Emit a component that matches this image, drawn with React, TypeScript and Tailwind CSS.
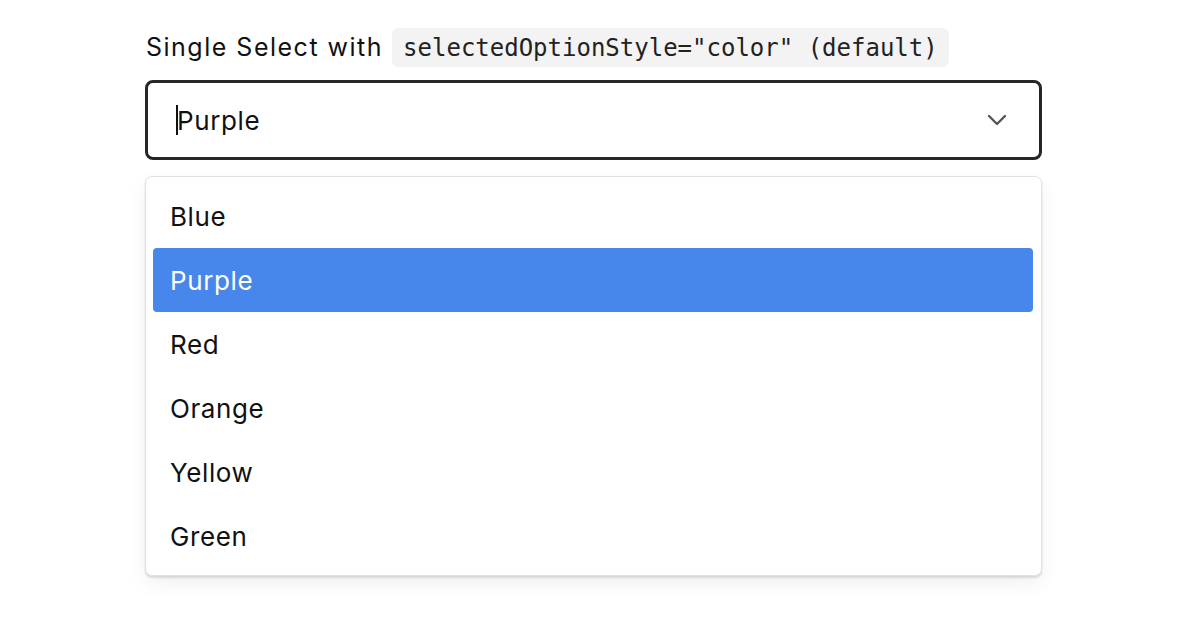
import React from "react";

const options = ["Blue", "Purple", "Red", "Orange", "Yellow", "Green"];

export default function App() {
  return (
    <div className="w-[1188px] h-[620px] bg-white" style={{ fontFamily: "Inter, 'Noto Sans', sans-serif" }}>
      <div className="w-[897px] ml-[145px] pt-[28px]">
        <div className="flex items-center h-[39px]">
          <span className="text-[25px] text-[#111] tracking-[1.5px] pl-[1px]">Single Select with</span>
          <code
            className="ml-[9px] h-[39px] flex items-center px-[11px] rounded-[6px] bg-[#f3f3f3] text-[24px] text-[#222]"
            style={{ fontFamily: "'DejaVu Sans Mono', monospace" }}
          >
            selectedOptionStyle="color" (default)
          </code>
        </div>
        <div className="mt-[13px] h-[80px] border-[3px] border-[#262626] rounded-[8px] flex items-center pl-[28px] pr-[32px]">
          <span className="w-[2px] h-[30px] bg-[#111] -mr-[1px]" />
          <span className="flex-1 text-[26px] tracking-[0.6px] text-[#111]">Purple</span>
          <svg width="20" height="12" viewBox="0 0 20 12" fill="none">
            <path d="M2 2 L10 10 L18 2" stroke="#555" strokeWidth="2.4" strokeLinecap="round" strokeLinejoin="round" />
          </svg>
        </div>
        <div className="mt-[16px] border border-[#e2e2e2] rounded-[7px] p-[7px] pr-[8px] bg-white shadow-[0_2px_2px_rgba(0,0,0,0.12),0_8px_20px_rgba(0,0,0,0.06)]">
          {options.map((o) => (
            <div
              key={o}
              className={
                "h-[64px] flex items-center pl-[17px] rounded-[4px] text-[26px] tracking-[0.6px] " +
                (o === "Purple" ? "bg-[#4786eb] text-white" : "text-[#111]")
              }
            >
              {o}
            </div>
          ))}
        </div>
      </div>
    </div>
  );
}
